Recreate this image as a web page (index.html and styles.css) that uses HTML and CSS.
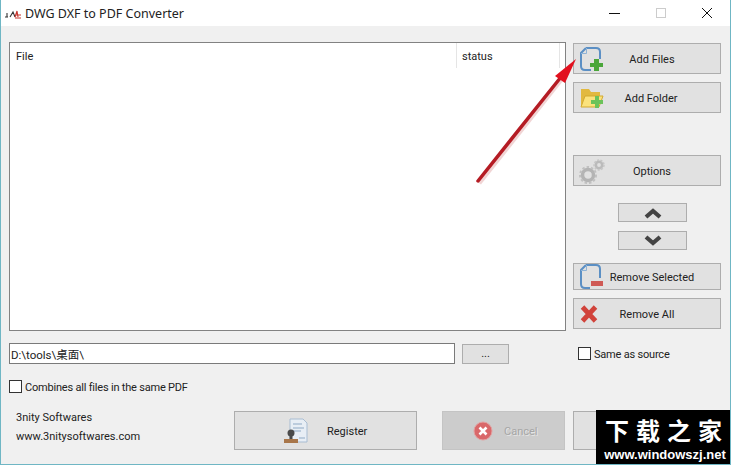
FILE: index.html
```html
<!DOCTYPE html>
<html lang="en">
<head>
    <meta charset="UTF-8">
    <meta name="viewport" content="width=device-width, initial-scale=1.0">
    <title>DWG DXF to PDF Converter</title>
    <link rel="stylesheet" href="styles.css">
</head>
<body>
    <div class="window">
        <div class="titlebar">
            <svg class="app-icon" width="18" height="10" viewBox="0 0 18 10">
                <path d="M1 8h3M3 4v4M6 8l3-5 2 5" fill="none" stroke="#333" stroke-width="1.1"/>
                <path d="M11 8l2-6 1 6M12 6h5M11 9h6" fill="none" stroke="#c8342c" stroke-width="1.1"/>
            </svg>
            <span class="title">DWG DXF to PDF Converter</span>
            <div class="win-controls">
                <svg width="12" height="12" viewBox="0 0 12 12"><path d="M0 6.500h11" stroke="#111" stroke-width="1"/></svg>
                <svg width="12" height="12" viewBox="0 0 12 12"><rect x="1.500" y="1.500" width="9" height="9" fill="none" stroke="#ccc"/></svg>
                <svg width="12" height="12" viewBox="0 0 12 12"><path d="M1 1l10 10M11 1L1 11" stroke="#111" stroke-width="1"/></svg>
            </div>
        </div>

        <div class="content">
            <div class="top">
                <div class="file-list">
                    <div class="list-head">
                        <div class="col-file">File</div>
                        <div class="col-status">status</div>
                        <div class="col-rest"></div>
                    </div>
                </div>
                <div class="side">
                    <button class="btn btn-side label-right">
                        <svg class="icon" width="26" height="26" viewBox="0 0 26 26">
                            <path d="M7 2h10q4 0 4 4v7M7 2L2 7v13q0 4 4 4h6" fill="none" stroke="#5b8fc4" stroke-width="2"/>
                            <path d="M2 7.500h5.500V2" fill="none" stroke="#8fb3d6" stroke-width="1"/>
                            <path d="M15 13h5v4h4v4h-4v4h-5v-4h-4v-4h4z" fill="#4aa63a"/>
                        </svg>
                        <span>Add Files</span>
                    </button>
                    <button class="btn btn-side label-mid mt-8">
                        <svg class="icon" width="26" height="24" viewBox="0 0 26 24">
                            <path d="M2 3h8l2 3h9v14H2z" fill="#e2b93f"/>
                            <path d="M2 21l4-11h18l-4 11z" fill="#fbe27c" stroke="#d3a92f"/>
                            <path d="M16 10h4v4h4v4h-4v4h-4v-4h-4v-4h4z" fill="#6cc35a"/>
                        </svg>
                        <span>Add Folder</span>
                    </button>
                    <button class="btn btn-side label-right mt-42">
                        <svg class="icon" width="28" height="28" viewBox="0 0 28 28">
                            <circle cx="9" cy="18" r="5.500" fill="none" stroke="#b4b4b4" stroke-width="3.500"/>
                            <circle cx="9" cy="18" r="8" fill="none" stroke="#c0c0c0" stroke-width="2" stroke-dasharray="2.500 2"/>
                            <circle cx="20" cy="8" r="3.200" fill="none" stroke="#bbb" stroke-width="2.600"/>
                            <circle cx="20" cy="8" r="5" fill="none" stroke="#c6c6c6" stroke-width="1.500" stroke-dasharray="2 1.500"/>
                        </svg>
                        <span>Options</span>
                    </button>
                    <div class="arrows">
                        <button class="btn btn-arrow">
                            <svg width="20" height="12" viewBox="0 0 20 12"><path d="M3 10l7-6 7 6" fill="none" stroke="#444" stroke-width="4.200"/></svg>
                        </button>
                        <button class="btn btn-arrow">
                            <svg width="20" height="12" viewBox="0 0 20 12"><path d="M3 2l7 6 7-6" fill="none" stroke="#444" stroke-width="4.200"/></svg>
                        </button>
                    </div>
                    <button class="btn btn-side label-right btn-selected">
                        <svg class="icon" width="26" height="26" viewBox="0 0 26 26">
                            <path d="M7 1h10q4 0 4 4v9M7 1L2 6v14q0 4 4 4h5" fill="none" stroke="#5b8fc4" stroke-width="2"/>
                            <path d="M2 6.500h5.500V1" fill="none" stroke="#8fb3d6" stroke-width="1"/>
                            <rect x="12" y="17" width="12" height="5" fill="#cf5a55"/>
                        </svg>
                        <span>Remove Selected</span>
                    </button>
                    <button class="btn btn-side mt-8">
                        <svg class="icon" width="20" height="20" viewBox="0 0 20 20">
                            <path d="M3.500 3l13 14M16.500 3l-13 14" stroke="#d1433b" stroke-width="4.800"/>
                        </svg>
                        <span>Remove All</span>
                    </button>
                </div>
            </div>

            <div class="path-row">
                <input class="path-input" type="text" value="D:\tools\桌面\" readonly>
                <button class="btn btn-browse">...</button>
                <label class="check same-source"><span class="box"></span><span class="check-text">Same as source</span></label>
            </div>

            <label class="check combine"><span class="box"></span><span class="check-text">Combines all files in the same PDF</span></label>

            <div class="footer">
                <div class="company">
                    <div>3nity Softwares</div>
                    <div>www.3nitysoftwares.com</div>
                </div>
                <button class="btn btn-big btn-register">
                    <svg width="26" height="26" viewBox="0 0 26 26">
                        <path d="M7 1h13l4 4v19H7z" fill="#e8eef5" stroke="#a9bdd2"/>
                        <path d="M10 6h9M10 10h11M10 13h8M16 20h6" stroke="#8fa9c4"/>
                        <circle cx="8" cy="15" r="3.500" fill="#4a4a4a"/>
                        <path d="M6.500 18h3v3h-3z" fill="#4a4a4a"/>
                        <rect x="1" y="21" width="14" height="4" fill="#a8764a"/>
                    </svg>
                    <span>Register</span>
                </button>
                <button class="btn btn-big btn-cancel">
                    <svg width="20" height="20" viewBox="0 0 20 20">
                        <circle cx="10" cy="10" r="9" fill="#d9686a" stroke="#e3a0a0"/>
                        <path d="M6.500 6.500l7 7M13.500 6.500l-7 7" stroke="#fff" stroke-width="2.600"/>
                    </svg>
                    <span>Cancel</span>
                </button>
                <button class="btn btn-big btn-next"></button>
            </div>
        </div>

        <svg class="callout" width="731" height="465" viewBox="0 0 731 465">
            <path d="M478 182L562 76" stroke="#e8b9b9" stroke-width="5" opacity=".6" transform="translate(1 1)"/>
            <path d="M478 181L561 77" stroke="#b51c24" stroke-width="3.500" stroke-linecap="round"/>
            <path d="M576 59L555 76l10 7z" fill="#e2101e"/>
        </svg>

        <div class="watermark">
            <div class="wm-title">下载之家</div>
            <div class="wm-url">www.windowszj.net</div>
        </div>
    </div>
</body>
</html>
```

FILE: styles.css
```css
* {
    box-sizing: border-box;
}

html, body {
    margin: 0;
    padding: 0;
}

body {
    font-family: Roboto, "Noto Sans CJK SC", sans-serif;
    font-size: 11px;
    color: #222;
    overflow: hidden;
}

.window {
    position: relative;
    width: 731px;
    height: 465px;
    background: #f0f0f0;
    border: 1px solid #6fb6c4;
    border-top: none;
    overflow: hidden;
}

.titlebar {
    display: flex;
    align-items: center;
    height: 26px;
    background: #fff;
    padding-left: 3px;
}

.app-icon {
    margin-right: 3px;
    margin-top: 2px;
}

.title {
    font-family: "Noto Sans", sans-serif;
    font-size: 12.500px;
    color: #222;
}

.win-controls {
    display: flex;
    align-items: center;
    gap: 34px;
    margin-left: auto;
    margin-right: 17px;
}

.content {
    padding: 16px 9px 0 8px;
}

.top {
    display: flex;
    align-items: flex-start;
}

.file-list {
    width: 557px;
    height: 289px;
    background: #fff;
    border: 1px solid #828282;
}

.list-head {
    display: flex;
    height: 25px;
    line-height: 27px;
}

.col-file {
    width: 447px;
    padding-left: 6px;
    border-right: 1px solid #e5e5e5;
}

.col-status {
    width: 103px;
    padding-left: 5px;
    border-right: 1px solid #e5e5e5;
}

.btn {
    background: #e1e1e1;
    border: 1px solid #adadad;
    font: inherit;
    color: #222;
    padding: 0;
    display: flex;
    align-items: center;
}

.btn span {
    margin-top: 2px;
}

.side {
    width: 148px;
    margin-left: 7px;
    margin-top: 1px;
}

.btn-side {
    position: relative;
    width: 148px;
    height: 31px;
    justify-content: center;
}

.btn-side .icon {
    position: absolute;
    left: 5px;
    top: 50%;
    transform: translateY(-50%);
}

.label-right {
    padding-left: 10px;
}

.label-mid {
    padding-left: 8px;
}

.btn-selected {
    height: 27px;
}

.mt-8 {
    margin-top: 8px;
}

.mt-42 {
    margin-top: 42px;
}

.arrows {
    display: flex;
    flex-direction: column;
    gap: 9px;
    margin: 17px 0 13px 45px;
}

.btn-arrow {
    width: 69px;
    height: 19px;
    justify-content: center;
}

.path-row {
    display: flex;
    align-items: center;
    margin-top: 12px;
    height: 21px;
}

.path-input {
    width: 446px;
    height: 21px;
    font: inherit;
    font-size: 11.500px;
    color: #222;
    background: #fff;
    border: 1px solid #7a7a7a;
    padding: 0 1px;
    outline: none;
}

.btn-browse {
    width: 47px;
    height: 20px;
    margin-left: 7px;
    justify-content: center;
}

.check {
    display: flex;
    align-items: center;
    gap: 3px;
}

.box {
    width: 13px;
    height: 13px;
    background: #fff;
    border: 1px solid #333;
}

.check-text {
    margin-top: 2px;
    letter-spacing: -0.2px;
}

.same-source {
    margin-left: 69px;
}

.combine {
    margin-top: 16px;
    height: 13px;
}

.footer {
    display: flex;
    align-items: flex-start;
    margin-top: 18px;
}

.company {
    width: 225px;
    margin-top: -3px;
    padding-left: 7px;
    line-height: 19px;
}

.btn-big {
    height: 39px;
}

.btn-register {
    width: 183px;
    gap: 18px;
    padding-left: 48px;
}

.btn-cancel {
    width: 123px;
    margin-left: 25px;
    gap: 11px;
    padding-left: 30px;
    background: #ccc;
    color: #a6a6a6;
    border-color: #c4c4c4;
    text-shadow: 1px 1px 0 #e4e4e4;
}

.btn-next {
    width: 148px;
    margin-left: 8px;
}

.callout {
    position: absolute;
    left: -1px;
    top: 0;
    pointer-events: none;
}

.watermark {
    position: absolute;
    right: -1px;
    bottom: -1px;
    width: 135px;
    height: 55px;
    background: #000;
    color: #fff;
    text-align: center;
}

.wm-title {
    font-family: "Noto Sans CJK SC", sans-serif;
    font-weight: 700;
    font-size: 24px;
    line-height: 28px;
    letter-spacing: 7px;
    margin-top: 6px;
    padding-left: 7px;
}

.wm-url {
    font-family: "Liberation Sans", sans-serif;
    font-weight: 700;
    font-size: 13px;
    line-height: 16px;
    margin-top: 3px;
    padding-left: 3px;
}
```
